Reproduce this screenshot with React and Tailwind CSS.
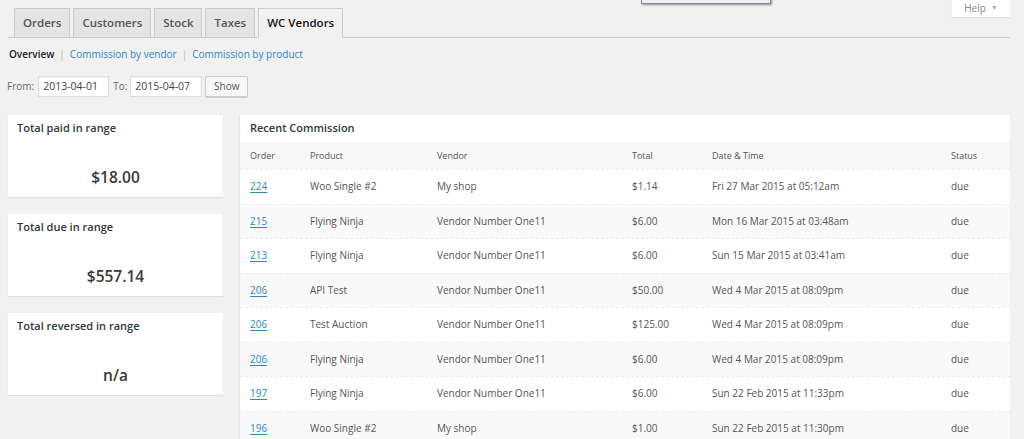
import React from "react";

const rows = [
  ["224", "Woo Single #2", "My shop", "$1.14", "Fri 27 Mar 2015 at 05:12am"],
  ["215", "Flying Ninja", "Vendor Number One11", "$6.00", "Mon 16 Mar 2015 at 03:48am"],
  ["213", "Flying Ninja", "Vendor Number One11", "$6.00", "Sun 15 Mar 2015 at 03:41am"],
  ["206", "API Test", "Vendor Number One11", "$50.00", "Wed 4 Mar 2015 at 08:09pm"],
  ["206", "Test Auction", "Vendor Number One11", "$125.00", "Wed 4 Mar 2015 at 08:09pm"],
  ["206", "Flying Ninja", "Vendor Number One11", "$6.00", "Wed 4 Mar 2015 at 08:09pm"],
  ["197", "Flying Ninja", "Vendor Number One11", "$6.00", "Sun 22 Feb 2015 at 11:33pm"],
  ["196", "Woo Single #2", "My shop", "$1.00", "Sun 22 Feb 2015 at 11:30pm"],
];

const tabs = ["Orders", "Customers", "Stock", "Taxes", "WC Vendors"];

const cards = [
  ["Total paid in range", "$18.00"],
  ["Total due in range", "$557.14"],
  ["Total reversed in range", "n/a"],
];

export default function App() {
  return (
    <div className="relative w-[1024px] h-[439px] overflow-hidden bg-[#f1f1f1] font-['Open_Sans',sans-serif] text-[#444]">
      {/* tooltip remnant */}
      <div className="absolute left-[641px] top-[-14px] w-[130px] h-[18px] bg-[#eeeef6] border border-[#888] shadow-[1px_1px_2px_rgba(0,0,0,0.4)]" />
      {/* help */}
      <div className="absolute right-[14px] top-0 w-[58px] h-[17px] bg-white shadow-[0_1px_1px_rgba(0,0,0,0.06)] flex items-center justify-center gap-[5px] text-[10px] text-[#888]">
        <span>Help</span>
        <span className="text-[7px] text-[#aaa]">▼</span>
      </div>

      <div className="pl-2 pr-[14px] pt-[8px]">
        <nav className="flex items-end gap-[3px] h-[30px] border-b border-[#ccc] pl-[6px]">
          {tabs.map((t, i) => (
            <div
              key={t}
              className={
                i === 4
                  ? "h-[30px] -mb-px px-2 border border-[#ccc] border-b-[#f1f1f1] bg-[#f1f1f1] text-[11.5px] font-semibold leading-[28px] text-[#111]"
                  : "h-[30px] -mb-px px-2 border border-[#ccc] bg-[#e4e4e4] text-[11.5px] font-semibold leading-[28px] text-[#555]"
              }
            >
              {t}
            </div>
          ))}
        </nav>
      </div>

      <div className="mt-[8px] pl-[9px] text-[10px] leading-[16px] flex items-center">
        <span className="font-semibold text-[#222]">Overview</span>
        <span className="mx-[5px] text-[#c8b79a]">|</span>
        <span className="text-[#2e87c0]">Commission by vendor</span>
        <span className="mx-[5px] text-[#bbb]">|</span>
        <span className="text-[#2e87c0]">Commission by product</span>
      </div>

      <div className="mt-[13px] pl-[7px] flex items-center h-[22px] text-[10px] text-[#666]">
        <span>From:</span>
        <div className="ml-[4px] w-[71px] h-[21px] bg-white border border-[#ddd] shadow-[inset_0_1px_2px_rgba(0,0,0,0.07)] pl-[4px] leading-[19px] text-[10.5px] text-[#444]">
          2013-04-01
        </div>
        <span className="ml-[4px]">To:</span>
        <div className="ml-[3px] w-[72px] h-[21px] bg-white border border-[#ddd] shadow-[inset_0_1px_2px_rgba(0,0,0,0.07)] pl-[4px] leading-[19px] text-[10.5px] text-[#444]">
          2015-04-07
        </div>
        <div className="ml-[3px] w-[43px] h-[21px] bg-[#f7f7f7] border border-[#ccc] rounded-[2px] shadow-[0_1px_0_#ccc] text-center leading-[19px] text-[10px] text-[#555]">
          Show
        </div>
      </div>

      <div className="mt-[18px] pl-2 pr-[14px] flex gap-4 items-start">
        <div className="w-[215px] flex flex-col gap-[17px] shrink-0">
          {cards.map(([t, v]) => (
            <div key={t} className="h-[82px] bg-white shadow-[0_1px_1px_rgba(0,0,0,0.08)] flex flex-col justify-between pl-[9px] pt-[5px] pb-[10px]">
              <div className="text-[11px] font-semibold leading-[16px] text-[#32373c]">{t}</div>
              <div className="text-center text-[15.5px] font-semibold leading-[20px] text-[#3a3a3a] pr-[9px]">{v}</div>
            </div>
          ))}
        </div>

        <div className="flex-1 bg-white shadow-[0_1px_1px_rgba(0,0,0,0.06)] border-l border-[#e6e6e6]">
          <div className="h-[27px] flex items-center pl-[10px] text-[11px] font-semibold text-[#32373c]">
            Recent Commission
          </div>
          <div className="h-[27px] bg-[#f7f7f7] grid grid-cols-[60px_127px_195px_80px_239px_1fr] pl-[10px] items-center text-[9px] text-[#555]">
            <span>Order</span>
            <span>Product</span>
            <span>Vendor</span>
            <span>Total</span>
            <span>Date &amp; Time</span>
            <span>Status</span>
          </div>
          {rows.map((r, i) => (
            <div
              key={i}
              className={
                (i % 2 === 1 ? "bg-[#f9f9f9] " : "bg-white ") +
                "h-[34.5px] border-t border-dashed border-[#ececec] grid grid-cols-[60px_127px_195px_80px_239px_1fr] pl-[10px] items-center text-[10px] text-[#555]"
              }
            >
              <span className="text-[#2e87c0] underline underline-offset-2">{r[0]}</span>
              <span>{r[1]}</span>
              <span>{r[2]}</span>
              <span>{r[3]}</span>
              <span>{r[4]}</span>
              <span>due</span>
            </div>
          ))}
        </div>
      </div>
    </div>
  );
}
